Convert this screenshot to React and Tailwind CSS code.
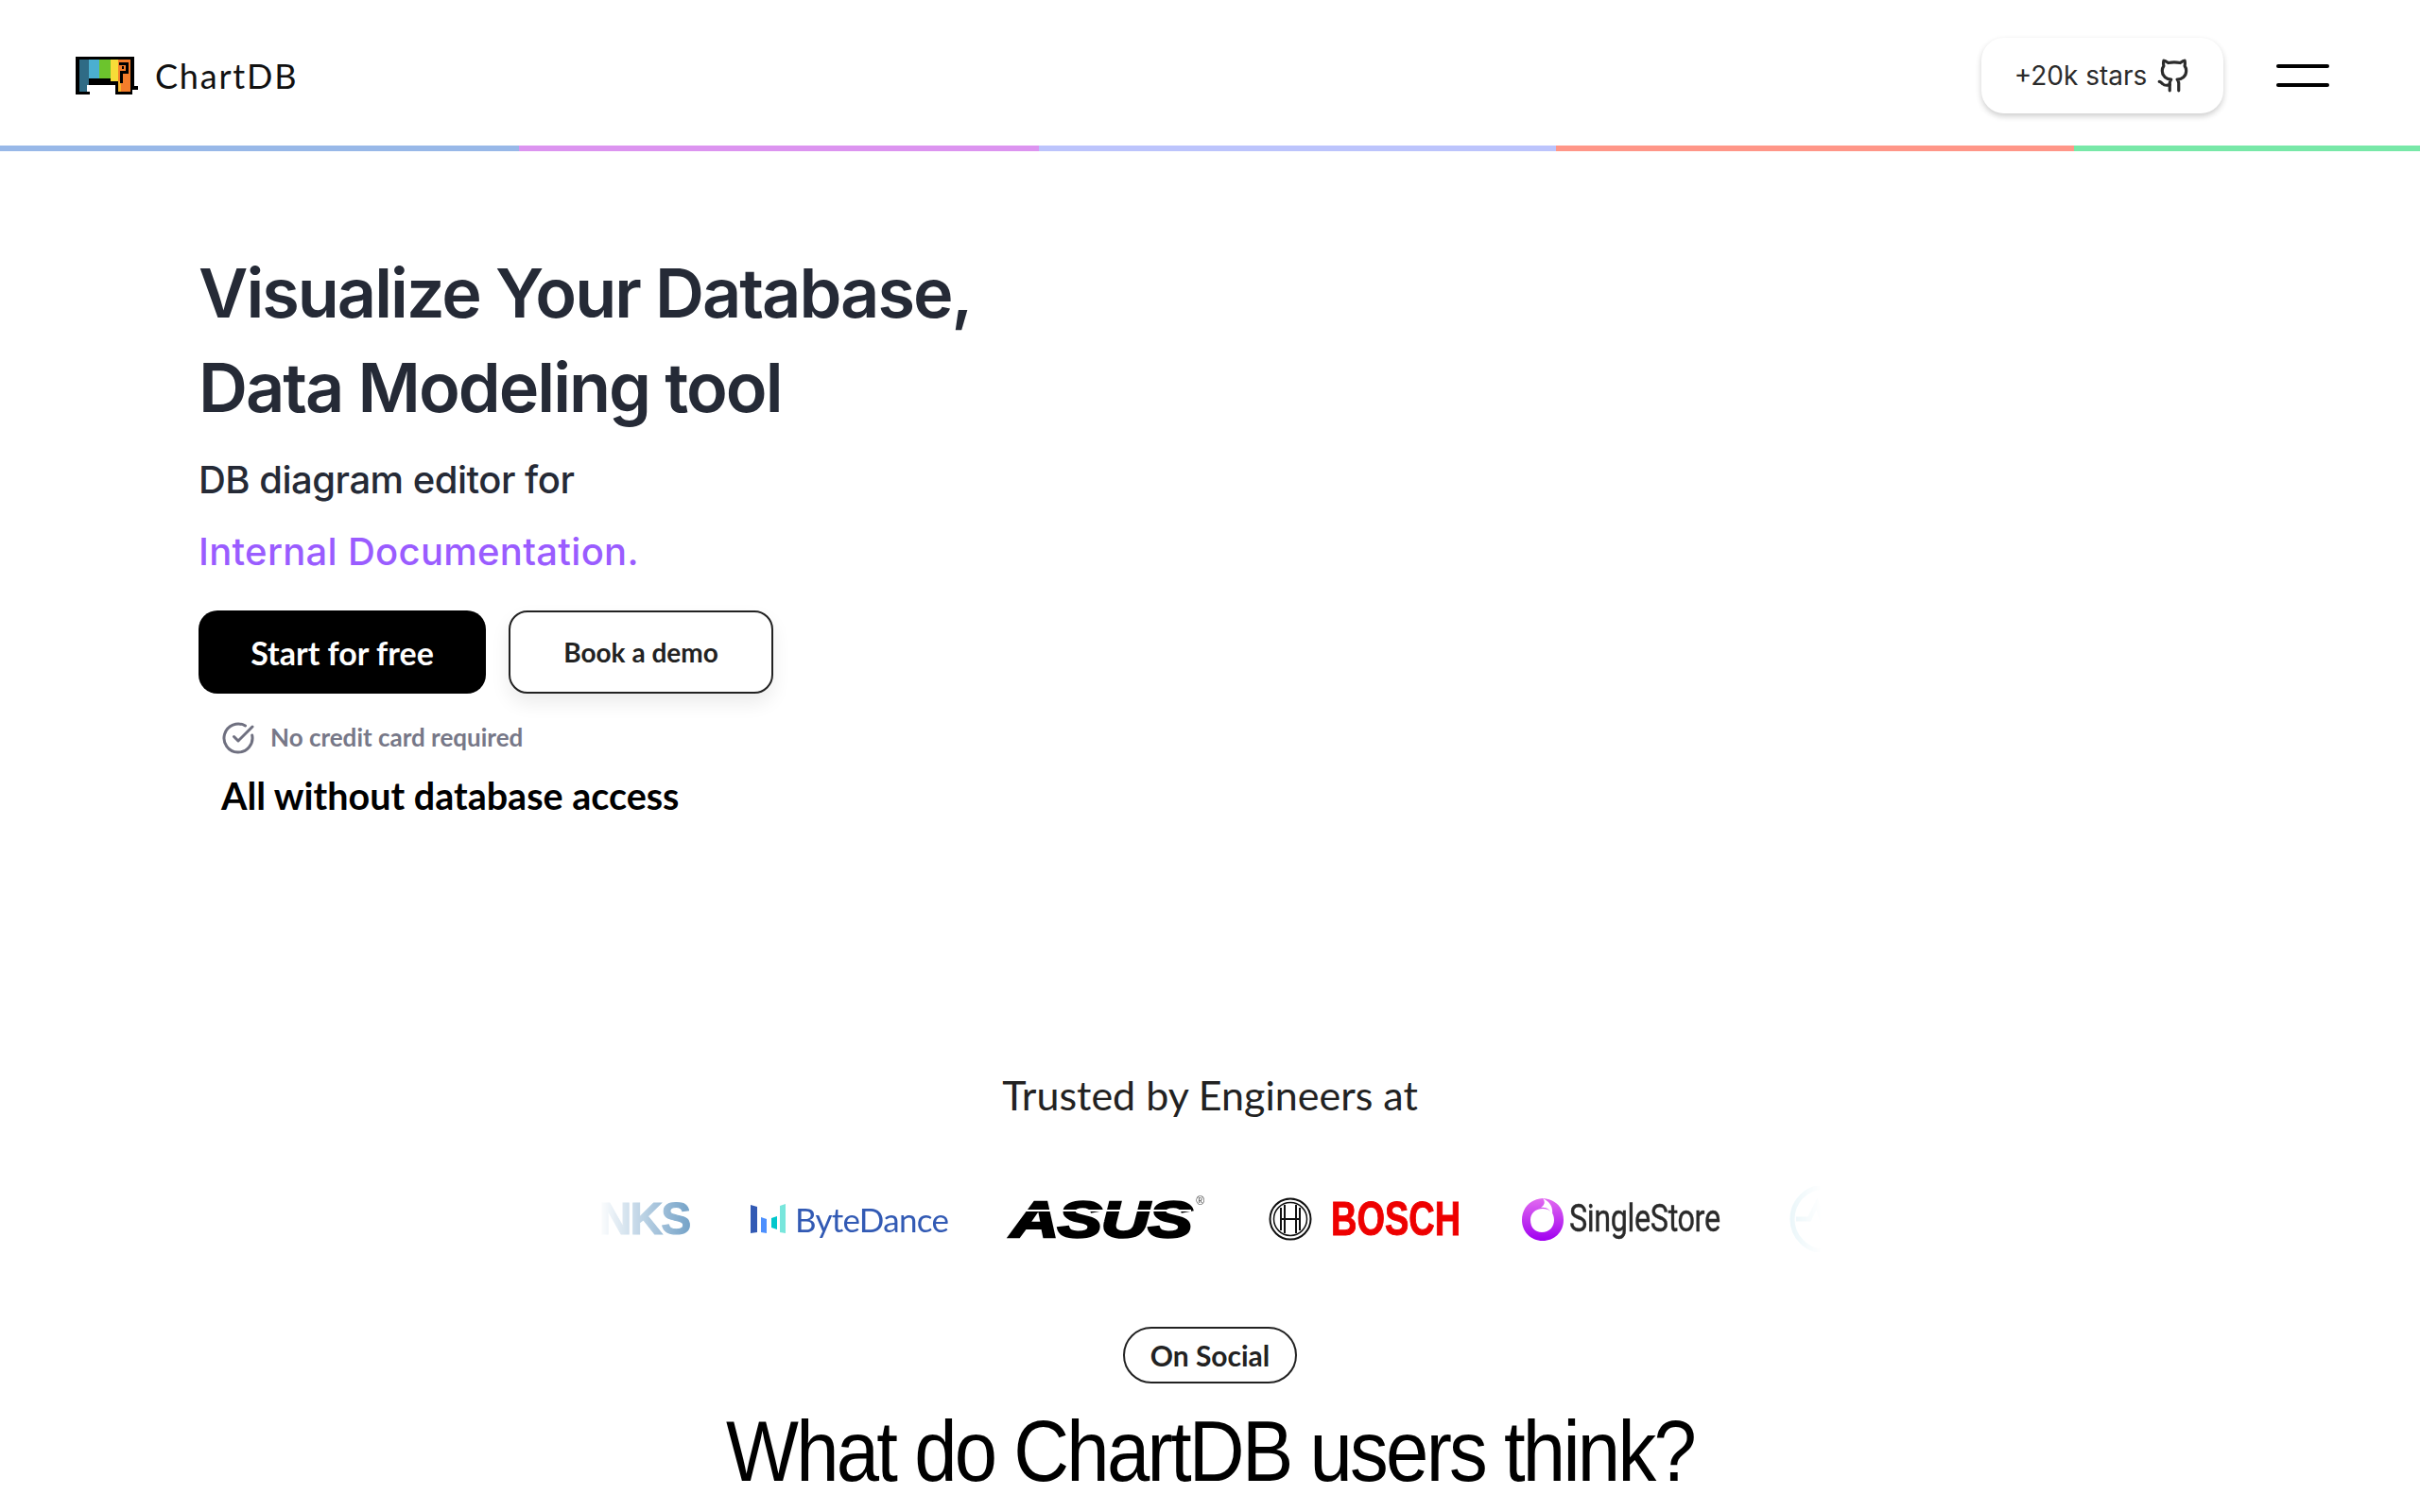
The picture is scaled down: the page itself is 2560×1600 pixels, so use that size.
import React from 'react'
import { Github, CircleCheckBig } from 'lucide-react'

function ElephantLogo() {
  return (
    <svg width="66" height="40" viewBox="0 0 66 40" shapeRendering="crispEdges">
      <path fill="#000" d="M0 0H62V31H66V35H60V40H42V30H15V40H0Z" />
      <rect x="4" y="3" width="10" height="34" fill="#2f6b85" />
      <path fill="#fff" d="M12 37H15V30H12Z" />
      <rect x="14" y="3" width="11" height="20" fill="#4bafd0" />
      <rect x="25" y="3" width="12" height="20" fill="#6cc42d" />
      <rect x="37" y="3" width="5" height="23" fill="#f7dc38" />
      <rect x="45" y="3" width="13" height="34" fill="#f47d2b" />
      <rect x="42" y="3" width="3" height="23" fill="#f7dc38" />
      <rect x="45" y="26" width="3" height="11" fill="#f7b52b" />
      <path fill="#000" d="M46 6H56V18H50V28H47V15H53V9H46Z" />
      <rect x="49" y="10" width="2" height="3" fill="#000" />
    </svg>
  )
}

function BoschMark() {
  return (
    <svg width="46" height="46" viewBox="0 0 46 46" fill="none" stroke="#111">
      <circle cx="23" cy="23" r="21.5" strokeWidth="2" />
      <circle cx="23" cy="23" r="17.5" strokeWidth="1.5" />
      <path strokeWidth="2" d="M13 11V35M33 11V35M13 23H33M17 8V38M29 8V38" />
    </svg>
  )
}

function ByteDanceMark() {
  return (
    <svg width="38" height="32" viewBox="0 0 38 32" className="shrink-0">
      <path fill="#325ab4" d="M0 1L7 3V30L0 31Z" />
      <path fill="#4d90fe" d="M11 14L17 16V31L11 30Z" />
      <path fill="#00c7cc" d="M22 15L28 13V27L22 25Z" />
      <path fill="#78e6dc" d="M31 2L37 0V31L31 30Z" />
    </svg>
  )
}

function SingleStoreMark() {
  return (
    <svg width="44" height="46" viewBox="0 0 44 46" className="shrink-0">
      <defs>
        <linearGradient id="ss" x1="0" y1="0" x2="0" y2="1">
          <stop offset="0" stopColor="#e26bf0" />
          <stop offset="1" stopColor="#a000f0" />
        </linearGradient>
      </defs>
      <path
        fillRule="evenodd"
        fill="url(#ss)"
        d="M22 1C35 2 44 10 44 24C44 37 34 46 22 46C9 46 0 36 0 24C0 11 9 2 22 1ZM22 12C14 12 9 17 9 24C9 32 14 37 21 37C29 37 34 31 34 24C34 16 29 12 22 12Z"
      />
      <path fill="#fff" d="M22 1C30 5 33 10 32 19C30 13 26 10 20 11C24 8 25 5 22 1Z" />
    </svg>
  )
}

function HealthMark() {
  return (
    <svg width="76" height="76" viewBox="0 0 76 76" fill="none" stroke="#bfe3ee" strokeWidth="5" className="shrink-0">
      <circle cx="38" cy="38" r="34" />
      <path d="M8 38H22L30 22L40 54L48 38H68" />
    </svg>
  )
}

function TrustedLogos() {
  return (
    <div className="mx-auto mt-[68px] flex h-[70px] w-[1294px] items-center overflow-hidden whitespace-nowrap [mask-image:linear-gradient(to_right,transparent,black_8%,black_92%,transparent)]">
      <span className="w-[97px] shrink-0 font-['Liberation_Sans',sans-serif] text-[48px] font-bold tracking-[-2px] text-[#6b9cc4] [-webkit-text-stroke:1px_#6b9cc4]">NKS</span>
      <div className="ml-[64px] flex shrink-0 items-center gap-[9px]">
        <ByteDanceMark />
        <span className="w-[160px] font-['Lato',sans-serif] text-[35px] tracking-[-0.7px] text-[#325ab4]">ByteDance</span>
      </div>
      <div className="relative ml-[68px] w-[205px] shrink-0 text-left">
        <span className="inline-block origin-left scale-x-[1.31] font-['Liberation_Sans',sans-serif] text-[54px] leading-none font-bold tracking-[-1px] text-black italic [-webkit-text-stroke:2.5px_black]">ASUS</span>
        <div className="absolute top-[17px] right-[14px] left-0 h-[2px] bg-white" />
        <span className="absolute top-[2px] right-0 font-['Liberation_Sans',sans-serif] text-[12px] leading-none text-[#444]">®</span>
      </div>
      <div className="ml-[68px] flex shrink-0 items-center gap-[20px]">
        <BoschMark />
        <span className="inline-block w-[137px] origin-left scale-x-[0.76] font-['Liberation_Sans',sans-serif] text-[50px] leading-none font-bold text-[#ee0000] [-webkit-text-stroke:1px_#ee0000]">BOSCH</span>
      </div>
      <div className="ml-[65px] flex shrink-0 items-center gap-[6px]">
        <SingleStoreMark />
        <span className="inline-block w-[159px] origin-left scale-x-[0.81] font-['Roboto',sans-serif] text-[40px] tracking-[-0.5px] text-[#2a2a2a] [-webkit-text-stroke:0.4px_#2a2a2a]">SingleStore</span>
      </div>
      <div className="ml-[73px] shrink-0">
        <HealthMark />
      </div>
    </div>
  )
}

export default function App() {
  return (
    <div className="h-[1600px] overflow-hidden bg-white font-['Inter',sans-serif]">
      <header className="flex h-[154px] items-center justify-between pt-[6px] pr-[96px] pl-[80px]">
        <div className="flex items-center gap-[18px]">
          <ElephantLogo />
          <span className="font-['Lato',sans-serif] text-[36px] tracking-[1.8px] text-[#111]">ChartDB</span>
        </div>
        <div className="flex items-center gap-[56px]">
          <button className="flex h-[80px] w-[256px] items-center justify-center gap-[10px] rounded-[24px] bg-white pl-[2px] text-[28px] text-[#2b2b2b] shadow-[0_3px_6px_rgba(0,0,0,0.2)]">
            +20k stars <Github size={38} strokeWidth={2} />
          </button>
          <div className="flex w-[56px] flex-col gap-[16px]">
            <div className="h-[4px] rounded-full bg-black" />
            <div className="h-[4px] rounded-full bg-black" />
          </div>
        </div>
      </header>

      <div className="flex h-[6px]">
        <div className="w-[549px] bg-[#98b8e8]" />
        <div className="w-[550px] bg-[#dc94f0]" />
        <div className="w-[547px] bg-[#bcc4fc]" />
        <div className="w-[548px] bg-[#ff9688]" />
        <div className="flex-1 bg-[#78e8a8]" />
      </div>

      <main className="pl-[210px]">
        <h1 className="mt-[100px] text-[72px] leading-[100px] font-semibold tracking-[-2px] text-[#252a36]">
          Visualize Your Database,
          <br />
          Data Modeling tool
        </h1>
        <p className="mt-[20px] text-[40px] leading-[56px] font-medium tracking-[-0.5px] text-[#252a36]">DB diagram editor for</p>
        <p className="mt-[20px] text-[40px] leading-[56px] font-medium tracking-[0.3px] text-[#9a5cff]">Internal Documentation.</p>
        <div className="mt-[34px] flex gap-[24px]">
          <button className="h-[88px] w-[304px] rounded-[20px] bg-black font-['Lato',sans-serif] text-[34px] font-bold text-white">Start for free</button>
          <button className="h-[88px] w-[280px] rounded-[20px] border-2 border-[#222] bg-white font-['Lato',sans-serif] text-[28px] font-bold text-[#222] shadow-[0_10px_20px_rgba(0,0,0,0.08)]">Book a demo</button>
        </div>
        <div className="mt-[27px] ml-[24px] flex items-center gap-[16px]">
          <CircleCheckBig size={36} strokeWidth={2} className="text-[#6f7080]" />
          <span className="font-['Lato',sans-serif] text-[26px] font-bold text-[#777888]">No credit card required</span>
        </div>
        <p className="mt-[12px] ml-[24px] font-['Lato',sans-serif] text-[39.5px] font-bold text-black">All without database access</p>
      </main>

      <section className="mt-[260px] text-center">
        <p className="font-['Lato',sans-serif] text-[43px] leading-[56px] text-[#222]">Trusted by Engineers at</p>
        <TrustedLogos />
        <span className="mt-[79px] inline-block h-[60px] w-[184px] rounded-full border-2 border-[#222] font-['Lato',sans-serif] text-[30px] leading-[56px] font-bold text-[#222]">On Social</span>
        <h2 className="mt-[17px] scale-x-[0.905] font-['Liberation_Sans',sans-serif] text-[90px] leading-[110px] tracking-[-3px] whitespace-nowrap text-black">What do ChartDB users think?</h2>
      </section>
    </div>
  )
}
